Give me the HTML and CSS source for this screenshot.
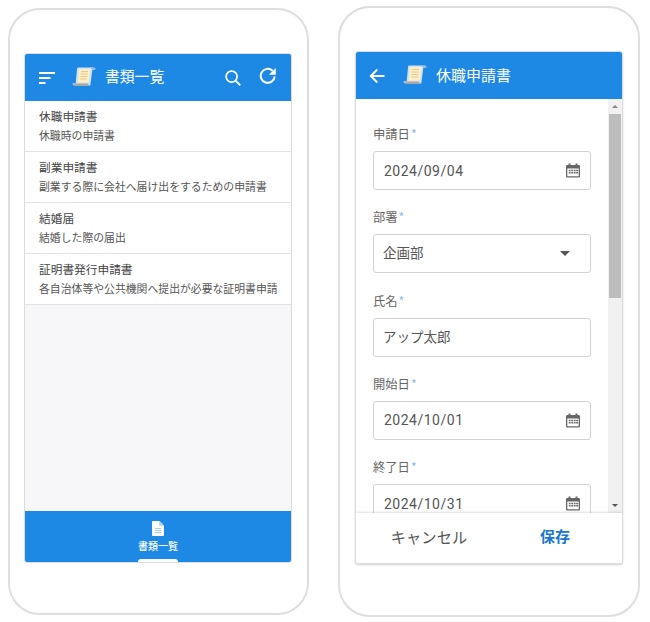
FILE: index.html
```html
<!DOCTYPE html>
<html lang="ja">
<head>
<meta charset="utf-8">
<title>書類</title>
<link rel="stylesheet" href="styles.css">
</head>
<body>
<svg class="defs" width="0" height="0" aria-hidden="true">
  <symbol id="scroll" viewBox="0 0 24 20">
    <path d="M6 .5h15.500c1.200 0 2 .8 2 1.800l-3.200.8-2 15.400H3c-1.500 0-2.500-.8-2.500-1.900l3.200-.3L5 2.300C5.100 1.300 5.400.5 6 .5z" fill="#cfe3f7"/>
    <path d="M7.200 2h11.300l-1.800 13.500H5.700z" fill="#fbeec8"/>
    <path d="M9 4.500h7M8.700 7h7M8.400 9.500h7M8.100 12h7" stroke="#e9c98a" stroke-width="1"/>
    <path d="M1.800 16.500h14c.5 1 1 1.500 1.700 1.800H3.700c-1 0-1.700-.8-1.900-1.800z" fill="#c2a27c"/>
    <path d="M19.500 1.300h2.700c.4 0 .7.300.7.700l-3.200.6z" fill="#8fa6bd"/>
  </symbol>
  <symbol id="cal" viewBox="0 0 16 16">
    <path fill="#666" fill-rule="evenodd" d="M3.500 1h2v1.500h5V1h2v1.500h1.200c.7 0 1.300.6 1.300 1.300v9.900c0 .7-.6 1.300-1.300 1.300H2.300c-.7 0-1.300-.6-1.300-1.300V3.800c0-.7.600-1.300 1.300-1.300h1.200zM2.300 6v7.700h11.400V6z"/>
    <path fill="#666" d="M3.800 7.200h1.800v1.500H3.800zM6.300 7.200h1.800v1.500H6.300zM8.800 7.200h1.800v1.500H8.800zM11.200 7.200H13v1.500h-1.800zM3.800 9.500h1.800V11H3.800zM6.300 9.500h1.800V11H6.300zM8.800 9.500h1.800V11H8.800zM11.200 9.500H13V11h-1.800z"/>
  </symbol>
</svg>
<main class="stage">
  <section class="phone phone-list">
    <div class="screen">
      <header class="appbar">
        <svg class="ic-menu" viewBox="0 0 16 12" aria-hidden="true"><path d="M0 1h16M0 6h11.500M0 11h6.500" stroke="#fff" stroke-width="2"/></svg>
        <svg class="ic-scroll" aria-hidden="true"><use href="#scroll"/></svg>
        <h1 class="appbar-title">書類一覧</h1>
        <svg class="ic-search" viewBox="0 0 16 16" aria-hidden="true"><circle cx="6.600" cy="6.600" r="5.500" fill="none" stroke="#fff" stroke-width="1.700"/><path d="M10.600 10.600l4.700 4.700" stroke="#fff" stroke-width="1.900"/></svg>
        <svg class="ic-reload" viewBox="0 0 18 18" aria-hidden="true"><path d="M15.700 9.400A7 7 0 1 1 13.600 3.800" fill="none" stroke="#fff" stroke-width="2"/><path d="M16.800 1v6.800H10z" fill="#fff"/></svg>
      </header>
      <ul class="doc-list">
        <li class="doc"><div class="doc-title">休職申請書</div><div class="doc-sub">休職時の申請書</div></li>
        <li class="doc"><div class="doc-title">副業申請書</div><div class="doc-sub">副業する際に会社へ届け出をするための申請書</div></li>
        <li class="doc"><div class="doc-title">結婚届</div><div class="doc-sub">結婚した際の届出</div></li>
        <li class="doc"><div class="doc-title">証明書発行申請書</div><div class="doc-sub">各自治体等や公共機関へ提出が必要な証明書申請</div></li>
      </ul>
      <nav class="tabbar">
        <svg class="ic-doc" viewBox="0 0 12 15" aria-hidden="true"><path fill="#fff" d="M1 0h6.500L12 4.500V14a1 1 0 0 1-1 1H1a1 1 0 0 1-1-1V1a1 1 0 0 1 1-1z"/><path fill="#a9cff3" d="M7.300 0v4.700H12zM3 7h6v1H3zM3 9h6v1H3zM3 11h6v1H3z"/></svg>
        <span class="tab-label">書類一覧</span>
        <span class="tab-marker"></span>
      </nav>
    </div>
  </section>

  <section class="phone phone-form">
    <div class="screen">
      <header class="appbar">
        <svg class="ic-back" viewBox="0 0 16 16" aria-hidden="true"><path d="M15.500 8H2M8.300 1.500L1.800 8l6.500 6.500" fill="none" stroke="#fff" stroke-width="2"/></svg>
        <svg class="ic-scroll" aria-hidden="true"><use href="#scroll"/></svg>
        <h1 class="appbar-title">休職申請書</h1>
      </header>
      <div class="scroller">
        <form class="form">
          <div class="field"><div class="label">申請日<i>*</i></div><div class="input"><span class="num">2024/09/04</span><svg class="ic-cal"><use href="#cal"/></svg></div></div>
          <div class="field"><div class="label">部署<i>*</i></div><div class="input"><span class="txt">企画部</span><span class="caret"></span></div></div>
          <div class="field"><div class="label">氏名<i>*</i></div><div class="input"><span class="txt">アップ太郎</span></div></div>
          <div class="field"><div class="label">開始日<i>*</i></div><div class="input"><span class="num">2024/10/01</span><svg class="ic-cal"><use href="#cal"/></svg></div></div>
          <div class="field"><div class="label">終了日<i>*</i></div><div class="input"><span class="num">2024/10/31</span><svg class="ic-cal"><use href="#cal"/></svg></div></div>
        </form>
        <div class="scrollbar">
          <span class="sb-up"></span>
          <span class="sb-thumb"></span>
          <span class="sb-down"></span>
        </div>
      </div>
      <footer class="actions">
        <span class="btn btn-cancel">キャンセル</span>
        <span class="btn btn-save">保存</span>
      </footer>
    </div>
  </section>
</main>
</body>
</html>
```
FILE: styles.css
```css
* { box-sizing: border-box; }
html, body { margin: 0; padding: 0; background: #fff; }
body {
  width: 650px;
  height: 622px;
  overflow: hidden;
  font-family: "Noto Sans CJK JP", "Noto Sans", sans-serif;
  color: #444;
}
.defs { position: absolute; }
.stage { display: flex; align-items: flex-start; padding: 6px 0 0 8px; gap: 29px; }

.phone {
  background: #fff;
  border: 2px solid #dedede;
  border-radius: 32px;
  flex: none;
}
.phone-list { width: 301px; height: 607px; margin-top: 2px; padding: 43px 15px 0 14px; }
.phone-form { width: 302px; height: 611px; padding: 43px 15px 0; }

.screen {
  display: flex;
  flex-direction: column;
  border: 1px solid #dcdcdc;
  border-radius: 3px;
  overflow: hidden;
  background: #f7f7f9;
}
.phone-list .screen { height: 510px; }
.phone-form .screen { height: 513px; box-shadow: 0 1px 2px rgba(0,0,0,.18); background: #fff; }

.appbar {
  flex: none;
  height: 47px;
  background: #1e88e5;
  display: flex;
  align-items: center;
  color: #fff;
}
.appbar-title { margin: 0; font-size: 14.800px; font-weight: 400; line-height: 1; }
.ic-menu { width: 16px; height: 12px; margin-left: 14px; }
.ic-scroll { width: 24px; height: 20px; margin-top: -1px; }
.phone-list .ic-scroll { margin-left: 17px; }
.phone-list .appbar-title { margin-left: 9px; margin-top: -2px; flex: 1; }
.ic-search { width: 16px; height: 16px; }
.ic-reload { width: 18px; height: 18px; margin-left: 18px; margin-right: 14px; margin-top: -3px; }
.ic-back { width: 16px; height: 16px; margin-left: 13px; }
.phone-form .ic-scroll { margin-left: 18px; }
.phone-form .appbar-title { margin-left: 9px; font-size: 15px; margin-top: -2px; }

.doc-list { list-style: none; margin: 0; padding: 0; flex: 1; }
.doc {
  height: 51px;
  padding: 6px 0 0 14px;
  background: #fff;
  border-bottom: 1px solid #e3e3e3;
}
.doc-title { font-size: 11.700px; line-height: 18px; color: #444; }
.doc-sub { font-size: 10.850px; line-height: 18px; margin-top: 1px; color: #555; white-space: nowrap; }

.tabbar {
  flex: none;
  height: 51px;
  background: #1e88e5;
  display: flex;
  flex-direction: column;
  align-items: center;
  position: relative;
  padding-top: 10px;
}
.ic-doc { width: 12px; height: 15px; }
.tab-label { font-size: 10px; line-height: 12px; margin-top: 4px; color: #fff; font-weight: 500; }
.tab-marker {
  position: absolute;
  bottom: 0;
  left: 50%;
  width: 40px;
  height: 3px;
  margin-left: -20px;
  background: #fff;
  border-radius: 3px 3px 0 0;
}

.scroller { flex: 1; min-height: 0; position: relative; overflow: hidden; background: #fff; }
.form { padding: 26px 31px 0 17px; }
.field { height: 83.250px; }
.label { font-size: 12.300px; line-height: 18px; color: #666; }
.label i { font-style: normal; color: #8ab4e8; margin-left: 1px; }
.input {
  margin-top: 8px;
  height: 39px;
  border: 1px solid #cfd2d6;
  border-radius: 3px;
  display: flex;
  align-items: center;
  justify-content: space-between;
  padding: 0 10px;
  font-size: 13.500px;
  color: #555;
  background: #fff;
}
.txt { margin-left: -1px; padding-bottom: 3px; }
.num { font-family: Roboto, sans-serif; font-size: 14px; letter-spacing: .5px; }
.ic-cal { width: 16px; height: 17px; margin-right: -1px; }
.caret {
  width: 0;
  height: 0;
  margin-right: 10px;
  border-left: 5px solid transparent;
  border-right: 5px solid transparent;
  border-top: 5px solid #555;
}

.scrollbar {
  position: absolute;
  top: 0;
  right: 0;
  bottom: 0;
  width: 14px;
  background: #f1f1f1;
  display: flex;
  flex-direction: column;
  align-items: center;
}
.sb-up, .sb-down { width: 0; height: 0; border-left: 3.500px solid transparent; border-right: 3.500px solid transparent; }
.sb-up { border-bottom: 3.500px solid #888; margin-top: 6px; }
.sb-thumb { width: 12px; height: 184px; margin-top: 6px; background: #bdbdbd; }
.sb-down { border-top: 3.500px solid #555; margin-top: auto; margin-bottom: 6px; }

.actions {
  flex: none;
  height: 50px;
  display: flex;
  background: #fff;
  position: relative;
  box-shadow: 0 -1px 2px rgba(0,0,0,.12);
}
.btn { flex: 1; display: flex; align-items: center; justify-content: center; font-size: 15px; padding-bottom: 5px; }
.btn-cancel { color: #555; padding-left: 14px; font-size: 15.300px; }
.btn-save { color: #1976d2; font-weight: 700; padding-left: 8px; padding-right: 8px; }
```
